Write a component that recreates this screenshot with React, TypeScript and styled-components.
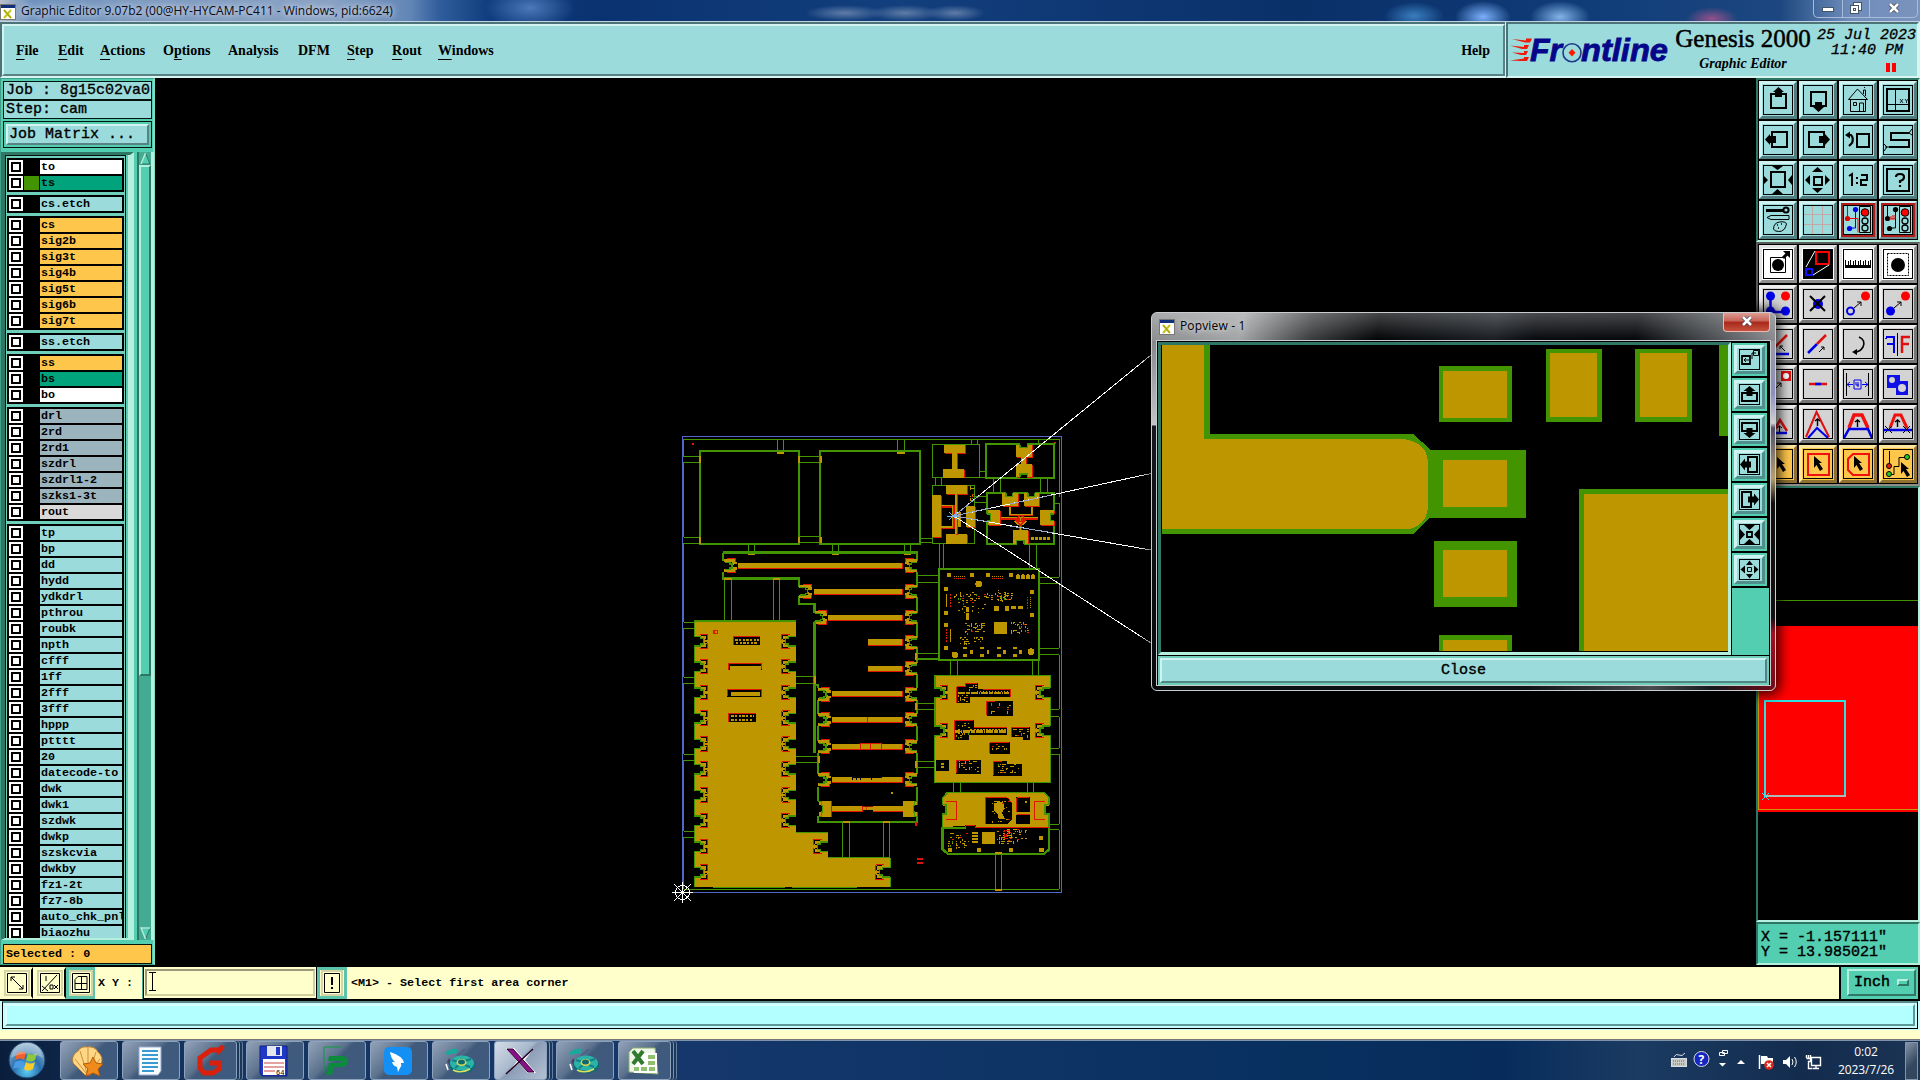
import React from "react";
import styled, { createGlobalStyle, css } from "styled-components";

const AQUA = "#9cdbdb";
const TEAL = "#54ceb0";
const DARK = "#2f7664";
const PALE = "#b4f0dd";
const CREAM = "#ffffcb";
const GOLD = "#bd9600";
const GREEN = "#429500";
const RED = "#e01600";
const ORANGE = "#ffc64c";
const MONO = `"Liberation Mono", "DejaVu Sans Mono", monospace`;
const SERIF = `"Liberation Serif", serif`;
const UI = `"Open Sans", "Noto Sans", sans-serif`;

const Global = createGlobalStyle`
  *, *::before, *::after { box-sizing: border-box; }
  body { margin: 0; background: #000; overflow: hidden; }
  svg { display: block; }
`;

const bevel = (light: string, dark: string, w = 3) => css`
  border: ${w}px solid;
  border-color: ${light} ${dark} ${dark} ${light};
`;

const Screen = styled.div`
  width: 1920px;
  height: 1080px;
  display: flex;
  flex-direction: column;
  background: #000;
  color: #000;
  font-family: ${MONO};
  position: relative;
  overflow: hidden;
`;

/* ---------- title bar ---------- */
const TitleBar = styled.div`
  height: 22px;
  flex: none;
  display: flex;
  align-items: flex-start;
  overflow: hidden;
  border-bottom: 1px solid #c3d2e2;
  background:
    radial-gradient(ellipse 45px 22px at 530px 8px, #4b78ba 0, transparent 100%),
    radial-gradient(ellipse 30px 14px at 1414px 16px, #3a7ec0 0, transparent 100%),
    radial-gradient(ellipse 28px 16px at 1483px 17px, #7cb0fb 0, transparent 100%),
    radial-gradient(ellipse 30px 16px at 1560px 17px, #82b4e8 0, transparent 100%),
    radial-gradient(ellipse 26px 12px at 1712px 19px, #95518a 0, transparent 100%),
    radial-gradient(ellipse 40px 8px at 845px 13px, #5f7da8 0, transparent 100%),
    radial-gradient(ellipse 36px 8px at 905px 13px, #5f7da8 0, transparent 100%),
    radial-gradient(ellipse 30px 8px at 955px 13px, #5f7da8 0, transparent 100%),
    linear-gradient(90deg, #b9c0cc 0, #6f93be 30px, #7d9ac0 130px, #8aa2c4 330px, #6286b6 410px, #2f5c9b 440px, #0f3c7c 490px, #0a3270 600px, #123f7d 900px, #0a3068 1300px, #103c78 1600px, #1c4780 1780px, #6f8dbb 1850px, #7a93bd 1920px);
`;
const TitleText = styled.span`
  font: 12px/20px ${UI};
  letter-spacing: 0;
  margin-left: 5px;
  white-space: nowrap;
  flex: 1;
  text-shadow: 0 0 6px #d6dfec, 0 0 6px #d6dfec;
  color: #0b0b14;
  padding-top: 1px;
`;
const TitleIcon = styled.div`
  padding-top: 4px;
`;
const AppIcon = styled.svg`
  width: 16px;
  height: 16px;
  flex: none;
`;
const CaptionButtons = styled.div`
  display: flex;
  width: 105px;
  height: 18px;
  margin-right: 2px;
  border: 1px solid #a9bbd8;
  border-top: 0;
  border-radius: 0 0 5px 5px;
  overflow: hidden;
`;
const Caption = styled.div<{ $w: number }>`
  width: ${(p) => p.$w}px;
  border-right: 1px solid #a9bbd8;
  display: flex;
  justify-content: center;
  align-items: center;
  padding-bottom: 1px;
  &:last-child { border-right: 0; }
`;

/* ---------- header ---------- */
const Header = styled.div`
  height: 56px;
  flex: none;
  display: flex;
  background: #d6f4f0;
`;
const MenuBar = styled.div`
  width: 1505px;
  border-top: 2px solid #4c7478;
  border-left: 2px solid #4c7478;
  border-bottom: 2px solid #d8f5f2;
  display: flex;
`;
const MenuInner = styled.div`
  flex: 1;
  ${bevel("#d2f3f0", "#588286", 2)}
  background: ${AQUA};
  display: flex;
  align-items: center;
  padding: 1px 13px 0 12px;
  gap: 17px;
  font: bold 14px/18px ${SERIF};
`;
const MenuItem = styled.span<{ $w?: number }>`
  width: ${(p) => (p.$w ? p.$w + "px" : "auto")};
  white-space: nowrap;
  u { text-underline-offset: 4px; text-decoration-thickness: 1px; }
`;
const Push = styled.span`
  flex: 1;
`;
const Brand = styled.div`
  flex: 1;
  margin: 0 1px 0 1px;
  border: 2px solid;
  border-color: #4c7478 #d8f5f2 #d8f5f2 #4c7478;
  background: ${AQUA};
  display: flex;
`;
const ProductCol = styled.div`
  width: 138px;
  margin-left: 2px;
  display: flex;
  flex-direction: column;
  align-items: center;
  white-space: nowrap;
`;
const Product = styled.div`
  font: 25px/29px ${SERIF};
  -webkit-text-stroke: 0.5px #000;
`;
const ProductSub = styled.div`
  font: italic bold 14px/22px ${SERIF};
`;
const DateCol = styled.div`
  flex: 1;
  display: flex;
  flex-direction: column;
  align-items: flex-end;
  font: italic 15px/15px ${MONO};
  -webkit-text-stroke: 0.3px #000;
  padding: 4px 1px 0 0;
  white-space: nowrap;
`;
const TimeLine = styled.div`
  margin-right: 13px;
`;
const Pause = styled.div`
  display: flex;
  gap: 2px;
  margin: 5px 20px 0 0;
  i { width: 4px; height: 9px; background: #ff0000; }
`;

/* ---------- main area ---------- */
const Main = styled.div`
  height: 887px;
  flex: none;
  display: flex;
`;
const Side = styled.div`
  width: 155px;
  flex: none;
  background: ${TEAL};
  border: 1px solid #3f9f88;
  border-right: 2px solid #7fdcc6;
  display: flex;
  flex-direction: column;
`;
const InfoBox = styled.div<{ $first?: boolean }>`
  margin: ${(p) => (p.$first ? "2px 1px 0 2px" : "0 1px 0 2px")};
  height: ${(p) => (p.$first ? 19 : 19)}px;
  flex: none;
  border: 1px solid #06140f;
  background: ${AQUA};
  font: 15px/18px ${MONO};
  -webkit-text-stroke: 0.35px #000;
  padding-left: 2px;
  white-space: pre;
  overflow: hidden;
`;
const MatrixFrame = styled.div`
  margin: 2px 1px 0 2px;
  height: 27px;
  flex: none;
  border: 1px solid #06140f;
  padding: 2px;
`;
const MatrixButton = styled.div`
  height: 21px;
  ${bevel("#d2f3f0", "#588286", 2)}
  background: ${AQUA};
  font: 15px/18px ${MONO};
  -webkit-text-stroke: 0.35px #000;
  padding-left: 1px;
  white-space: pre;
`;
const ListFrame = styled.div`
  margin-top: 4px;
  height: 788px;
  flex: none;
  display: flex;
`;
const ListEdge = styled.div`
  width: 133px;
  display: flex;
  border-left: 4px solid ${DARK};
  border-top: 3px solid ${DARK};
  border-right: 4px solid ${PALE};
  border-bottom: 2px solid ${PALE};
  background: #5fcab3;
`;
const ListView = styled.div`
  width: 122px;
  height: 783px;
  border: 1px solid #06140f;
  border-bottom: 0;
  padding: 2px 2px 0 1px;
  overflow: hidden;
  display: flex;
  flex-direction: column;
  gap: 3px;
  background: #6ed0ba;
`;
const ListRidge = styled.div`
  width: 2px;
  margin-left: 2px;
  background: ${PALE};
`;
const Group = styled.div`
  flex: none;
  width: 117px;
  background: #000;
  padding: 1px 0;
`;
const LayerRow = styled.div`
  height: 16px;
  display: flex;
  padding: 1px 2px 1px 2px;
`;
const Check = styled.i`
  width: 14px;
  height: 14px;
  flex: none;
  background: #fff;
  padding: 2px;
  display: flex;
  &::after { content: ""; width: 10px; height: 10px; border: 2px solid #000; background: #fff; }
`;
const Swatch = styled.i<{ $on?: boolean }>`
  width: 15px;
  height: 14px;
  flex: none;
  margin: 0 1px 0 1px;
  background: ${(p) => (p.$on ? GREEN : "#000")};
`;
const LayerName = styled.span<{ $c: string }>`
  flex: 1;
  min-width: 0;
  height: 14px;
  background: ${(p) => p.$c};
  color: #000;
  font: bold 11.7px/14px ${MONO};
  padding-left: 1px;
  overflow: hidden;
  white-space: pre;
`;
const ScrollBar = styled.div`
  width: 17px;
  margin-left: 3px;
  border-left: 2px solid ${DARK};
  border-right: 3px solid ${PALE};
  background: #43ab92;
  display: flex;
  flex-direction: column;
  align-items: center;
`;
const Thumb = styled.div`
  width: 12px;
  height: 511px;
  ${bevel(PALE, DARK, 2)}
  background: ${TEAL};
`;
const Selected = styled.div`
  margin: 4px 1px 0 2px;
  height: 20px;
  flex: none;
  border: 1px solid #06140f;
  background: ${ORANGE};
  font: bold 11.7px/18px ${MONO};
  padding-left: 2px;
  white-space: pre;
`;
const Canvas = styled.div`
  width: 1601px;
  background: #000;
`;

/* ---------- right tool column ---------- */
const Tools = styled.div`
  width: 164px;
  display: flex;
  flex-direction: column;
`;
const ToolPanel = styled.div<{ $gray?: boolean }>`
  flex: none;
  border: 2px solid;
  border-color: ${(p) => (p.$gray ? "#5a5a58 #8d8d8a #8d8d8a #5a5a58" : `${DARK} ${PALE} ${PALE} ${DARK}`)};
  background: #000;
  padding: 1px;
  display: grid;
  grid-template-columns: repeat(4, 38px);
  gap: 2px;
`;
type Tone = "aqua" | "red" | "white" | "gray" | "gold";
const tones: Record<Tone, [string, string, string]> = {
  aqua: [AQUA, "#cff3f0", "#527d80"],
  red: [AQUA, "#cff3f0", "#6f8f90"],
  white: ["#ffffff", "#e4e4e4", "#8e8e8e"],
  gray: ["#d3d3d3", "#eeeeee", "#767676"],
  gold: [ORANGE, "#ffe6a0", "#8f7030"],
};
const ToolButton = styled.div<{ $t: Tone }>`
  width: 38px;
  height: 38px;
  padding: 1px;
  border: 3px solid;
  border-color: ${(p) => {
    const [, l, d] = tones[p.$t];
    return `${l} ${d} ${d} ${l}`;
  }};
  background: ${(p) => (p.$t === "red" ? "#b01c1c" : tones[p.$t][0])};
  svg { background: ${(p) => tones[p.$t][0]}; }
  ${(p) => p.$t === "red" && css`border-width: 2px; padding: 2px;`}
`;
const Overview = styled.div`
  height: 436px;
  flex: none;
  border: 2px solid;
  border-color: ${DARK} ${PALE} ${PALE} ${DARK};
  background: #000;
`;
const Coords = styled.div`
  flex: 1;
  border: 2px solid;
  border-color: ${DARK} ${PALE} ${PALE} ${DARK};
  background: ${TEAL};
  font: 15px/15px ${MONO};
  -webkit-text-stroke: 0.4px #000;
  padding: 6px 0 0 3px;
  white-space: pre;
`;

/* ---------- status rows ---------- */
const StatusRow = styled.div`
  height: 34px;
  flex: none;
  border-top: 2px solid #000;
  background: ${CREAM};
  display: flex;
  font: bold 11.7px/32px ${MONO};
  white-space: pre;
`;
const StatusButton = styled.div<{ $teal?: boolean; $w: number }>`
  width: ${(p) => p.$w}px;
  height: 32px;
  flex: none;
  border: 3px solid ${(p) => (p.$teal ? "#5cc4aa" : CREAM)};
  border-right: ${(p) => (p.$teal ? `3px solid #5cc4aa` : "2px solid #000")};
  background: ${CREAM};
  display: flex;
  justify-content: center;
  align-items: center;
  svg { outline: 2px solid #d4d4a4; outline-offset: 1px; }
`;
const XYLabel = styled.div`
  width: 45px;
  margin-left: 3px;
  border-right: 1px solid #4a9;
`;
const XYField = styled.div`
  width: 174px;
  border: 1px solid #000;
  border-top: 0;
  padding: 2px 1px;
`;
const XYInput = styled.div`
  height: 27px;
  ${bevel("#9a9a7a", "#cfcfa0", 2)}
  padding: 1px 0 0 2px;
`;
const Prompt = styled.div`
  flex: 1;
  margin-left: 4px;
`;
const UnitBox = styled.div`
  width: 81px;
  border: 2px solid #000;
  border-width: 0 2px 0 2px;
  background: ${TEAL};
  padding: 2px 2px 2px 6px;
`;
const UnitButton = styled.div`
  height: 27px;
  ${bevel(PALE, DARK, 2)}
  font: 15px/24px ${MONO};
  -webkit-text-stroke: 0.5px #000;
  display: flex;
  align-items: center;
  justify-content: space-between;
  padding: 0 5px;
  i { width: 12px; height: 7px; ${bevel(PALE, DARK, 2)} }
`;
const MessageRow = styled.div`
  height: 31px;
  flex: none;
  background: #c9fbfb;
  border-top: 2px solid #000;
  padding: 0 0 2px 2px;
`;
const MessageFrame = styled.div`
  height: 28px;
  margin-right: 2px;
  border: 1px solid #000;
  border-top: 2px solid #5a8788;
  padding: 1px 2px 2px;
  background: #c9fdfd;
`;
const MessageField = styled.div`
  height: 22px;
  background: #b3ffff;
  ${bevel("#d6ffff", "#5d9999", 2)}
`;
const CreamStrip = styled.div`
  height: 10px;
  flex: none;
  background: ${CREAM};
  border-bottom: 1px solid #777;
`;

/* ---------- taskbar ---------- */
const Taskbar = styled.div`
  flex: 1;
  display: flex;
  align-items: stretch;
  border-top: 1px solid #7f93ad;
  background: linear-gradient(90deg, #0a1e3c 0, #15355f 200px, #15376b 700px, #08305f 1300px, #072c5c 1500px, #1b3b62 1640px, #132c4e 1800px, #1b3454 1920px);
`;
const Start = styled.div`
  width: 60px;
  display: flex;
  justify-content: center;
  padding-right: 6px;
`;
const Task = styled.div<{ $active?: boolean; $stack?: boolean }>`
  width: ${(p) => (p.$stack ? 53 : 58)}px;
  margin-right: ${(p) => (p.$stack ? 9 : 4)}px;
  border: 1px solid #8da3bd;
  border-radius: 3px;
  background: ${(p) =>
    p.$active
      ? "linear-gradient(135deg, #d5dde8 0, #a8b8cc 45%, #8b9db6 50%, #b3c0d2 100%)"
      : "linear-gradient(135deg, #93a3b8 0, #5b718d 42%, #405a7b 50%, #3d5a80 100%)"};
  ${(p) => p.$stack && css`box-shadow: 2px 0 0 #1c375c, 3px 0 0 #7d93ae, 5px 0 0 #1c375c, 6px 0 0 #667e9c;`}
  display: flex;
  justify-content: center;
  align-items: center;
  padding-right: 2px;
`;
const Tray = styled.div`
  margin-left: auto;
  display: flex;
  align-items: center;
`;
const TrayIcons = styled.svg`
  width: 160px;
  height: 38px;
`;
const Clock = styled.div`
  width: 78px;
  text-align: center;
  color: #fff;
  font: 12px/18px ${UI};
  letter-spacing: -0.1px;
`;
const ShowDesktop = styled.div`
  width: 13px;
  height: 38px;
  margin: 0 2px 0 0;
  border: 1px solid #8494ab;
  background: linear-gradient(135deg, #8593a6, #33475f 60%);
`;

/* ---------- popview window ---------- */
const PopWindow = styled.div`
  position: absolute;
  left: 1151px;
  top: 312px;
  width: 625px;
  height: 379px;
  border: 1px solid #c9ccd0;
  border-radius: 6px;
  box-shadow: 0 0 12px 4px rgba(0, 0, 0, 0.75);
  padding: 0 4px 4px;
  background:
    linear-gradient(180deg, transparent 0 28px, #85878b 28px, #c2c4c6 112px, #15181c 113px, #06080a 100%) 0 0 / 5px 100% no-repeat,
    linear-gradient(180deg, transparent 0 28px, #9a9aa4 28px, #8c8ec0 80px, #d0d0d4 110px, #50506a 115px, #b5a070 165px, #111 190px, #111 305px, #a01020 320px, #700c18 100%) 100% 0 / 6px 100% no-repeat,
    linear-gradient(180deg, rgba(255,255,255,.25) 0, rgba(255,255,255,0) 26px) 0 0 / 100% 28px no-repeat,
    linear-gradient(100deg, #8c8e90 0, #a4a6a8 90px, #3c3e40 160px, #050608 225px, #1c2025 340px, #0a0c10 380px, #07090c 480px, #5a5d61 570px, #909296 625px) 0 0 / 100% 28px no-repeat,
    linear-gradient(90deg, #0c0e10 0, #0e1215 60%, #4a4d50 80%, #14181c 90%, #700c18 100%);
`;
const PopTitle = styled.div`
  height: 27px;
  display: flex;
  padding-left: 3px;
  font: 12px/26px ${UI};
`;
const PopName = styled.span`
  margin-left: 5px;
  flex: 1;
  letter-spacing: 0.15px;
  text-shadow: 0 0 7px #ddd, 0 0 5px #ccc;
`;
const PopIcon = styled.div`
  padding-top: 6px;
`;
const PopClose = styled.div`
  width: 47px;
  height: 19px;
  margin-right: 1px;
  border: 1px solid #f0b8b0;
  border-top: 0;
  border-radius: 0 0 4px 4px;
  background: linear-gradient(180deg, #dd9d94 0, #c66256 45%, #a8281a 50%, #c4523e 100%);
  display: flex;
  justify-content: center;
  align-items: center;
  padding-bottom: 2px;
`;
const PopBody = styled.div`
  height: 346px;
  border: 1px solid #c8ccd0;
  background: #000;
  padding: 1px;
  display: flex;
  flex-direction: column;
`;
const PopUpper = styled.div`
  height: 313px;
  flex: none;
  display: flex;
`;
const PopView = styled.div`
  width: 573px;
  flex: none;
  border: 3px solid;
  border-color: ${DARK} ${PALE} ${PALE} ${DARK};
`;
const PopTools = styled.div`
  flex: 1;
  margin-left: 1px;
  margin-top: 1px;
  background: ${TEAL};
  display: flex;
  flex-direction: column;
`;
const PopToolCell = styled.div`
  height: 35px;
  flex: none;
  border-bottom: 2px solid #000;
  border-right: 2px solid #000;
  padding: 2px;
`;
const PopToolButton = styled.div`
  width: 31px;
  height: 29px;
  ${bevel("#cff3f0", "#4f8f8c", 3)}
  background: ${AQUA};
  display: flex;
  justify-content: center;
  align-items: center;
`;
const PopCloseBar = styled.div`
  flex: 1;
  margin: 1px 0 0;
  border: 2px solid #6fcdb8;
  display: flex;
`;
const PopCloseButton = styled.div`
  flex: 1;
  ${bevel("#cff3f0", "#4f8583", 2)}
  background: ${AQUA};
  font: 15px/21px ${MONO};
  -webkit-text-stroke: 0.4px #000;
  text-align: center;
`;

/* ---------- data ---------- */
type G = [string, string[]][];
const STEEL = "#9bb4bd";
const groups: G[] = [
  [["#ffffff", ["to"]], ["#00a37c", ["ts"]]],
  [[AQUA, ["cs.etch"]]],
  [[ORANGE, ["cs", "sig2b", "sig3t", "sig4b", "sig5t", "sig6b", "sig7t"]]],
  [[AQUA, ["ss.etch"]]],
  [[ORANGE, ["ss"]], ["#00a37c", ["bs"]], ["#ffffff", ["bo"]]],
  [[STEEL, ["drl", "2rd", "2rd1", "szdrl", "szdrl1-2", "szks1-3t"]], ["#d9d9d9", ["rout"]]],
  [[AQUA, ["tp", "bp", "dd", "hydd", "ydkdrl", "pthrou", "roubk", "npth", "cfff", "1ff", "2fff", "3fff", "hppp", "ptttt", "20", "datecode-to", "dwk", "dwk1", "szdwk", "dwkp", "szskcvia", "dwkby", "fz1-2t", "fz7-8b", "auto_chk_pnl", "biaozhu"]]],
];

const K = "#000";
const B = "#0000e8";
const R = "#f00000";
const L = (d: string, c = K, w = 1, fill = "none") => <path d={d} stroke={c} strokeWidth={w} fill={fill} />;
const P = (d: string, c = K) => <path d={d} fill={c} />;
const Dot = ({ x, y, r = 4.5, c = B }: { x: number; y: number; r?: number; c?: string }) => <circle cx={x} cy={y} r={r} fill={c} />;

const cursor = (x: number, y: number) => P(`M${x} ${y}l8 7h-3l4 6l-3 2l-3.500-6l-2.500 3z`);
const lights = (a: string, b: string) => (
  <>
    {L("M16.500 1.500h11v26h-11z")}
    <circle cx="22" cy="7.500" r="3.800" fill="#ff0000" stroke={K} />
    <circle cx="22" cy="16" r="3" fill="none" stroke={K} strokeWidth="1.300" />
    <circle cx="22" cy="23" r="3" fill="none" stroke={K} strokeWidth="1.300" />
    {L("M4.500 0v12", a)}
    {L("M12.500 4v19H7", b)}
    <Dot x={12.500} y={4.500} r={2.600} c={b} />
    <Dot x={4.500} y={13.500} r={2.600} c={a} />
    <Dot x={6.500} y={23.500} r={2.600} c={b} />
  </>
);

const icons: [Tone, React.ReactNode][] = [
  ["aqua", <>{L("M8 9h15v14h-15z", K, 2)}{P("M15.500 2l5.500 5h-2v5h-7v-5h-2z")}</>],
  ["aqua", <>{L("M8 7h15v14h-15z", K, 2)}{P("M15.500 27l5.500-5h-2v-5h-7v5h-2z")}</>],
  ["aqua", <>{L("M5.500 14.500L14.500 4l10 10.500zM7.500 14.500v12h15v-12M10.500 17.500h3v3h-3zM16.500 26v-8h4v8M20.500 9v-4h2v6M21 3l1-1")}</>],
  ["aqua", <>{L("M4 4h22v22h-22z", K, 2)}{L("M12.500 4v22M4 19.500h22")}{L("M17 14l3 4M20 14l-3 4M22 14l1.500 2l1.500-2M23.500 16v2", K, 0.8)}</>],
  ["aqua", <>{L("M9 7h15v15h-15z", K, 2)}{P("M2 14.500l5-5.500v2h6v7h-6v2z")}</>],
  ["aqua", <>{L("M6 7h15v15h-15z", K, 2)}{P("M27 14.500l-5-5.500v2h-6v7h6v2z")}</>],
  ["aqua", <>{L("M14 9h12v13h-12z", K, 2)}{L("M5 10h3q3 3 1 8l-3 3", K, 2.2)}{P("M2 10l5-3.500v7z")}</>],
  ["aqua", <>{L("M26 8H8v7h18v7H6", K, 2)}{L("M29 4l-3 4l3 2M1 19l3 3l-3 4M2 22h4")}</>],
  ["aqua", <>{L("M8 7h14v15h-14z", K, 2)}{P("M9 1h11l-5.500 4zM9 29h11l-5.500-5zM0 10v10l5-5zM29 10v10l-4-5z")}</>],
  ["aqua", <>{L("M11 12h8v8h-8z", K, 2)}{P("M9 7h11l-5.500-5zM9 23h11l-5.500 5zM7 10v10l-5-5zM22 10v10l5-5z")}</>],
  ["aqua", <>{L("M6 11l3-2v12M14 12v2M14 17v2M18 10h6v5h-6v5h6", K, 2)}</>],
  ["aqua", <>{L("M4 4h22v22h-22z", K, 2)}{L("M13 12q0-3 4-3q4 0 4 3q0 3-4 4v2M17 20v2", K, 2.2)}</>],
  ["aqua", <>{L("M3 5.500h17", K, 3)}<circle cx="23" cy="5" r="2.600" fill="none" stroke={K} strokeWidth="2" />{L("M4 12.500l4-2h18v4h-18zM10.500 24q0-6 6-7q6-1 7 2q-1 3-2 5q-3 3-6 2.500q-4 0-5-2.500z")}{L("M14 20h1M18 19h1M15 23h1", K, 1.500)}</>],
  ["aqua", <>{L("M9.500 1v28M19.500 1v28M1 9.500h28M1 19.500h28", "#c4a8a8")}</>],
  ["red", <>{lights("#e00000", B)}{L("M5 13.500h10v14", R)}</>],
  ["red", <>{lights(K, K)}{L("M6 14h6M8 11v3M10 10v4M12 10v4", R)}</>],
  ["white", <>{L("M7.500 8.500h15v15h-15z")}<Dot x={15} y={16} r={6} c={K} />{L("M20 9l6-6", K, 3)}{P("M20 2h7v7z")}</>],
  ["white", <>{P("M0 0h30v30H0z")}{L("M13 3h13v12H13z", "#ff0000", 2)}{L("M3 20h6v6h-6z", "#1010ff", 2)}{L("M3 18L12 2M10 26l16-10", "#fff")}</>],
  ["white", <>{P("M2 11v8h26v-8h-1v5h-1v-4h-1v4h-2v-5h-1v5h-1v-4h-1v4h-2v-5h-1v5h-1v-4h-1v4h-2v-5h-1v5h-1v-4h-1v4h-2v-5h-1v5h-1v-4h-1v4h-2v-5z")}</>],
  ["white", <><rect x="4.500" y="4.500" width="21" height="22" fill="none" stroke={K} strokeDasharray="2 1" /><Dot x={15} y={16} r={7} c={K} /></>],
  ["gray", <>{L("M7.500 8v12q2 3 6 3h9", B, 2.500)}<Dot x={7.500} y={7} /><Dot x={22.500} y={7} c="#ff0000" /><Dot x={7.500} y={22} /><Dot x={22.500} y={22} /></>],
  ["gray", <><Dot x={15} y={15} r={5} />{L("M7 7l15 15M22 7L7 22", K, 2)}</>],
  ["gray", <><Dot x={22.500} y={7} c="#ff0000" /><circle cx="7.500" cy="22" r="3.500" fill="none" stroke={B} strokeWidth="2" />{L("M11 19l7-6M14 13h4v4")}</>],
  ["gray", <><Dot x={22.500} y={7} c="#ff0000" /><Dot x={7.500} y={22} />{L("M11 19l7-6M14 13h4v4")}</>],
  ["gray", <>{L("M10 20L24 6", "#e01010", 2.500)}{L("M4 25h22", B, 2.500)}{L("M22 22l-5-5M17 20v-3h3")}</>],
  ["gray", <>{L("M5 24L14 15", B, 2.500)}{L("M14 15L23 6", "#e01010", 2.500)}{L("M16 23l5-5M18 18h3v3")}</>],
  ["gray", <>{L("M16 8q7 3 4 10q-3 5-8 5", K, 1.600)}{P("M9 23l5-3v6z")}</>],
  ["gray", <>{L("M3 8h8v16M11 15h-7M3 9v1", B, 2)}{L("M19 24V8h8M19 15h7", "#e01010", 2.500)}{L("M14.500 4v23")}</>],
  ["gray", <>{P("M18 2h10v10h-10z", "#e01010")}<circle cx="23" cy="7" r="3" fill="#fff" />{L("M12 20l6-6M14 14h4v4")}</>],
  ["gray", <>{L("M6 15h18", "#e01010", 2.500)}{L("M12 15h6", B, 2.500)}</>],
  ["gray", <>{L("M3.500 4v23M25.500 4v23")}{L("M4 15.500h6M7 13l-3 2.500l3 2.500M19 15.500h6M22 13l3 2.500l-3 2.500M11 11h7v9h-7zM13 13v3h3M15 13v5", B)}</>],
  ["gray", <>{P("M4 6h13v6h8v14h-12v-7h-9z", "#1010e8")}<Dot x={9} y={11} r={3} c="#d3d3d3" /><Dot x={19} y={19} r={4} c="#d3d3d3" /></>],
  ["gray", <>{L("M10 24L17 11L24 22", "#e01010", 2.500)}{L("M6 24h18", B, 2.500)}{L("M16.500 24v-7M14 19l2.500-2l2.500 2")}</>],
  ["gray", <>{L("M3 28L13.500 3L26 28", "#e01010", 2)}{L("M5 29L14 19L25 29", B, 2)}{L("M14.500 17v-7M12 12l2.500-2l2.500 2", K, 1.400)}</>],
  ["gray", <>{L("M6 19L11 6h8l6 13", "#f01010", 3.500)}{L("M1 29L6 20h19l4 9", B, 2.500)}{L("M14.500 18v-7M12 13l2.500-2l2.500 2", K, 1.400)}</>],
  ["gray", <>{L("M7 19L12 6h6l6 13", "#f01010", 3)}{L("M1 21h28", B, 2.500)}{L("M14.500 18v-7M12 13l2.500-2l2.500 2", K, 1.400)}{L("M2 17l7 7M9 17l-7 7M20 17l7 7M27 17l-7 7")}</>],
  ["gold", <>{cursor(14, 8)}</>],
  ["gold", <>{L("M5 5h21v21h-21z", "#f01010", 2)}{cursor(11, 7)}</>],
  ["gold", <>{L("M10 5h16v21h-16l-5-5v-11z", "#f01010", 2)}{cursor(11, 7)}</>],
  ["gold", <>{L("M6.500 2v18M6 25.500h5v-8h5v-9h8")}<circle cx="24" cy="8" r="2.500" fill="#20d020" stroke={K} /><circle cx="6" cy="17" r="2.500" fill="#e02010" stroke={K} /><circle cx="6" cy="25" r="2.500" fill="#20d020" stroke={K} />{cursor(18, 13)}</>],
];

const popIcons: React.ReactNode[] = [
  <>{L("M3 7h8v8h-8z", K, 1.800)}{L("M14.500 1.500h5v5h-5zM13 10v-6h4M5 11h5M7 9l-2 2l2 2")}</>,
  <>{L("M8 9H3v8h15v-8h-5", K, 2)}{P("M10.500 2l6 5h-3v5h-6v-5h-3z")}</>,
  <>{L("M8 12H3V4h15v8h-5", K, 2)}{P("M10.500 19l6-5h-3v-5h-6v5h-3z")}</>,
  <>{L("M9 8V3h9v15h-9v-5", K, 2)}{P("M1 10.500l5-6v3h6v6h-6v3z")}</>,
  <>{L("M12 8V3h-9v15h9v-5", K, 2)}{P("M20 10.500l-5-6v3h-6v6h6v3z")}</>,
  <>{L("M8 8h5v5h-5z", K, 1.800)}{P("M5 1h11l-5.500 5zM5 20h11l-5.500-5zM1 5v11l5-5.500zM20 5v11l-5-5.500z")}</>,
  <>{L("M8.500 8.500h4v4h-4z")}{P("M7 6h7l-3.500-4.500zM7 15h7l-3.500 4.500zM6 6.500v8l-4.500-4zM15 6.500v8l4.500-4z")}</>,
];

const XIcon = () => (
  <AppIcon viewBox="0 0 16 16">
    <rect x="0.500" y="0.500" width="15" height="15" fill="#fff" stroke="#777" />
    <rect x="1" y="1" width="14" height="3" fill="#10307c" />
    <path d="M4 6l7 8M11 6l-7 8" stroke="#c6c414" strokeWidth="2" />
    <path d="M4 6l7 8" stroke="#777a10" strokeWidth="0.600" />
  </AppIcon>
);

/* ---------- board drawing ---------- */
const seeded = (seed: number) => {
  let s = seed;
  return () => {
    s = (s * 16807) % 2147483647;
    return s / 2147483647;
  };
};
/** A scatter of small pads inside a region. */
const Pads = ({ x, y, w, h, n, seed, c = GOLD }: { x: number; y: number; w: number; h: number; n: number; seed: number; c?: string }) => {
  const r = seeded(seed * 7919);
  return (
    <>
      {Array.from({ length: Math.round(n * 0.8) }, (_, i) => {
        const a = Math.floor((r() * w) / 6) * 6;
        const b = Math.floor((r() * h) / 6) * 6;
        const v = r();
        return <rect key={i} x={x + a} y={y + b} width={v > 0.5 ? 6 : 3} height={v > 0.3 ? 3 : 7} fill={v > 0.93 ? RED : v < 0.06 ? GREEN : c} />;
      })}
    </>
  );
};
/** Edge cut-out with its connector bracket; `f` is -1 when it opens to the right. */
const Notch = ({ x, y, f = 1 }: { x: number; y: number; f?: number }) => (
  <g transform={`translate(${x} ${y}) scale(${f} 1)`}>
    <path d="M-4-14H20V-9H29V9H20V14H-4z" fill="#000" />
    <path d="M-1-14H20V-8H29V8H20V14H-1" fill="none" stroke={GREEN} strokeWidth="4" />
    <path d="M17-22H41V-4M41 4V22H17" fill="none" stroke={RED} strokeWidth="3" />
    <path d="M22-19H38V-8M38 8V19H22M32-5h6M32 5h6" fill="none" stroke="#000" strokeWidth="3" />
  </g>
);
/** Strip end clamp. */
const Clamp = ({ x, y, f = 1 }: { x: number; y: number; f?: number }) => (
  <g transform={`translate(${x} ${y}) scale(${f} 1)`}>
    <path d="M8-21H34V-10M8 21H34V10" fill="none" stroke={RED} strokeWidth="3" />
    <path d="M-2-15H28V-7H36M-2 15H28V7H36" fill="none" stroke={GOLD} strokeWidth="9" />
    <path d="M0-11H16V-6H22V6H16V11H0" fill="none" stroke={GREEN} strokeWidth="4" />
    <path d="M28-3h9M28 3h9" stroke="#000" strokeWidth="3" />
  </g>
);
const Strip = ({ x, y, x2, h = 17 }: { x: number; y: number; x2: number; h?: number }) => (
  <>
    <rect x={x} y={y - h / 2} width={x2 - x + 3} height={h + 1} fill={RED} />
    <rect x={x} y={y - h / 2} width={x2 - x} height={h - 2} fill={GOLD} />
  </>
);
const gl = (d: string, w = 2.500) => <path d={d} fill="none" stroke={GREEN} strokeWidth={w} />;
const gr = (x: number, y: number, w: number, h: number, c = GOLD) => <rect x={x} y={y} width={w} height={h} fill={c} />;
const rg = (x: number, y: number, w: number, h: number) => (
  <>
    {gr(x + 3, y + 2, w, h, RED)}
    {gr(x, y, w, h)}
  </>
);

const Board = () => (
  <svg width="1601" height="887" viewBox="155 78 1601 887" shapeRendering="crispEdges">
    <g transform="translate(670 420) scale(.33333)">
      {/* rails along the panel outline */}
      {gl("M42 58H1168V232M42 58V110H90M42 127H90M42 127V352H90M42 370H90M42 370V607H75M42 625H75M42 625V772H75M1168 250V472H1108M1168 492V685H1108M1168 250H1152M1108 492H1168M322 58V98M340 58V98M683 58V98M703 58V98M905 58V74M923 58V74M1106 70V58", 3)}
      {gl("M90 94H387V373H90zM90 240v130M450 94H750V373H450z", 5)}
      {gl("M387 110h63M387 127h63M387 349h63M387 367h63M750 355h40M750 367h40M235 373v30M253 373v30M487 373v30M505 373v30M705 373v30M721 373v30", 3)}
      {gr(322, 95, 20, 6)}{gr(682, 95, 22, 6)}{gr(235, 399, 20, 6)}{gr(487, 399, 20, 6)}{gr(703, 399, 20, 6)}
      {gr(87, 108, 5, 20)}{gr(385, 108, 5, 20)}{gr(450, 108, 5, 20)}{gr(87, 352, 5, 20)}{gr(385, 350, 5, 20)}{gr(450, 350, 5, 20)}
      {gr(67, 69, 5, 5, RED)}{gr(1153, 67, 5, 5, RED)}
      {/* upper right coupons */}
      {gl("M787 73H928V173H787zM787 196H914V371H787zM797 173v25M815 173v25M930 154h18v18h-18zM971 173v45M992 173v45M1112 173v45M1133 173v45M914 230h36M914 247h36M808 371v77M821 371v77M1078 371v77M1100 371v77", 3)}
      {gl("M947 71H1152V174H947zM950 218H1153V373H950z", 6)}
      {rg(822, 74, 64, 25)}{rg(847, 97, 13, 52)}{rg(819, 148, 64, 25)}
      {rg(828, 196, 64, 27)}{rg(828, 343, 64, 28)}{rg(787, 226, 27, 126)}{rg(889, 258, 25, 64)}{rg(856, 222, 5, 120)}
      <path d="M814 260H851V323H814" fill="none" stroke={RED} strokeWidth="7" />
      <path d="M814 257H848V321H814" fill="none" stroke={GOLD} strokeWidth="5" />
      {gr(864, 275, 10, 45)}
      <Pads x={900} y={198} w={12} h={50} n={22} seed={5} />
      {rg(1037, 74, 48, 38)}{rg(1052, 110, 16, 24)}{rg(1037, 132, 48, 40)}
      {gr(1050, 66, 22, 16, "#000")}{gr(1050, 162, 22, 12, "#000")}{gl("M1050 74v8h22v-8M1050 172v-10h22v10", 4)}
      {rg(997, 220, 46, 38)}{rg(1062, 220, 44, 38)}{rg(953, 270, 38, 45)}{rg(1110, 270, 42, 45)}{rg(1028, 331, 46, 40)}
      {gr(1008, 214, 20, 16, "#000")}{gr(1074, 214, 20, 16, "#000")}{gr(946, 282, 16, 20, "#000")}{gr(1142, 282, 14, 20, "#000")}{gr(1040, 360, 22, 16, "#000")}
      {gl("M1008 218v12h20v-12M1074 218v12h20v-12M950 282h12v20h-12M1152 282h-10v20h10M1040 373v-12h22v12", 4)}
      <path d="M1020 262V285H1086V262M992 295H1104M1051 295V331" fill="none" stroke={RED} strokeWidth="8" />
      <path d="M1020 260V283H1086V260M992 293H1104M1051 295V331" fill="none" stroke={GOLD} strokeWidth="4" />
      <path d="M1030 302H1074L1062 314H1040z" fill={GOLD} /><path d="M1036 300l15 16l16-16" fill="none" stroke={RED} strokeWidth="4" />
      <circle cx="1052" cy="296" r="9" fill="none" stroke={RED} strokeWidth="4" />
      {[0, 1, 2, 3, 4].map((i) => gr(1084 + i * 12, 351, 7, 9))}
      {/* stepped strip array */}
      {gl("M160 398H742V423M160 398V423M160 455V476H387V500M387 528V553H434V578M434 605V1000M742 455V500M742 530V578M742 605V655M742 685V700", 7)}
      {gl("M164 478V603M185 478V603M310 478V603M328 478V603", 3)}
      {gr(163, 473, 24, 7)}{gr(308, 473, 22, 7)}
      <Clamp x={164} y={438} /><Strip x={204} y={437} x2={697} /><Clamp x={740} y={438} f={-1} />
      <Clamp x={390} y={514} /><Strip x={432} y={515} x2={697} /><Clamp x={740} y={514} f={-1} />
      <Clamp x={436} y={592} /><Strip x={474} y={593} x2={697} /><Clamp x={740} y={592} f={-1} />
      <Strip x={594} y={667} x2={697} /><Clamp x={740} y={668} f={-1} />
      {gl("M742 466H808M742 487H808M742 700H808M742 717H808", 3)}
      {/* main component board */}
      {gl("M807 447H1107V720H807z", 7)}
      {[[837, 465], [907, 465], [953, 465], [1022, 465], [828, 507], [828, 578], [828, 615], [828, 684], [1087, 515], [1087, 585]].map(([a, b], i) => (
        <React.Fragment key={i}>{gr(a - 6, b - 6, 12, 12)}</React.Fragment>
      ))}
      {[0, 1, 2, 3].map((i) => <ellipse key={i} cx={1044 + i * 15} cy="470" rx="6" ry="8" fill={GOLD} />)}
      <circle cx="926" cy="492" r="10" fill={GOLD} /><circle cx="855" cy="705" r="10" fill={GOLD} /><circle cx="1083" cy="695" r="10" fill={GOLD} />
      {gr(972, 606, 38, 37)}{gr(973, 558, 14, 14)}{gr(1006, 558, 11, 14)}{gr(1024, 558, 14, 9)}{gr(1044, 558, 14, 9)}{gr(888, 561, 9, 15)}{gr(888, 580, 9, 19)}
      <path d="M853 470h36M967 470h36" stroke={GOLD} strokeWidth="3" strokeDasharray="3 3" />
      <path d="M853 477h36M967 477h36" stroke={RED} strokeWidth="3" strokeDasharray="3 3" />
      <path d="M829 523v38M841 628v38M1082 530v38" stroke={GOLD} strokeWidth="3" strokeDasharray="4 2" />
      <path d="M841 523v38M829 628v38M1072 530v38M882 525v36" stroke={RED} strokeWidth="3" strokeDasharray="5 3" />
      <Pads x={852} y={515} w={98} h={66} n={60} seed={11} />
      <Pads x={952} y={518} w={82} h={24} n={36} seed={23} />
      <Pads x={984} y={510} w={24} h={34} n={24} seed={24} />
      <Pads x={884} y={608} w={60} h={32} n={44} seed={31} />
      <Pads x={1022} y={605} w={52} h={36} n={44} seed={47} />
      <Pads x={870} y={650} w={74} h={22} n={34} seed={53} />
      {[880, 930, 980, 1028].map((a) => (
        <React.Fragment key={a}>{gr(a, 680, 12, 7)}{gr(a, 703, 12, 7)}{gr(a + 20, 690, 8, 11)}</React.Fragment>
      ))}
    </g>

    <g transform="translate(670 640) scale(.33333)">
      {gl("M42 112H75M42 130H75M42 130V343H75M42 361H75M42 361V574H75M42 592H75M42 592V748H1168V570H1138M1168 553H1138M1168 553V343H1140M1168 325H1140M1168 325V230H1140M1168 208H1140M1168 208V44H1108M1168 25H1108M1168 25V-40M378 109H436M378 130H436M378 349H446M378 367H446M740 40H808M740 58H808M740 190H795M740 208H795M740 364H795M740 382H795M842 60V106M862 60V106M1088 60V106M1106 60V106M850 428V460M871 428V460M1073 428V460M1090 428V460M518 545V652M538 545V652M641 545V655M658 545V655M976 640V748M994 640V748", 3)}
      {/* large L-shaped board */}
      <path d="M73-57H378V577H473V655H661V740H73z" fill={GOLD} />
      {gl("M73-57H378M378 577H473M475 653H661M73 740V712M73 682V635M73 605V558M73 528V480M73 450V404M73 374V326M73 298V250M73 220V174M73 144V96M73 66V18M73-12V-57M661 655V740M130 742H345M365 742H560", 4)}
      {[4, 80, 158, 235, 312, 388, 465, 542, 620, 697].map((y) => <Notch key={y} x={72} y={y} />)}
      {[4, 80, 158, 235, 312, 388, 465, 542].map((y) => <Notch key={y} x={376} y={y} f={-1} />)}
      <Notch x={472} y={620} f={-1} /><Notch x={658} y={697} f={-1} />
      {gr(130, -30, 14, 12, RED)}{gr(134, -27, 7, 7)}
      {gr(189, -12, 82, 26, "#000")}
      <path d="M190 14V-11H270" fill="none" stroke={RED} strokeWidth="3" />
      <path d="M196 0H266M198 10H264" stroke={GOLD} strokeWidth="5" strokeDasharray="7 4" />
      {gr(175, 69, 100, 20, "#000")}{gr(179, 77, 95, 14)}<path d="M175 89V70H275V88" fill="none" stroke={RED} strokeWidth="3" />
      {gr(172, 147, 103, 24, "#000")}{gr(182, 155, 88, 13)}<path d="M173 168V148H275V170" fill="none" stroke={RED} strokeWidth="3" />
      {gr(175, 219, 83, 26, "#000")}<path d="M176 245V220H257" fill="none" stroke={RED} strokeWidth="3" /><path d="M184 228H252M184 240H250" stroke={GOLD} strokeWidth="6" strokeDasharray="7 4" />
      {/* lower strip array */}
      {gl("M434-57V135H444V145M444 180V222M444 258V302M444 340V402M444 440V484M444 528V546H742V528M742 484V440M742 402V340M742 302V258M742 222V180M742 145V102M742 68V22", 6)}
      <Strip x={594} y={8} x2={697} /><Clamp x={740} y={8} f={-1} />
      <Strip x={594} y={86} x2={697} /><Clamp x={740} y={86} f={-1} />
      {[163, 240, 321, 420].map((y) => (
        <React.Fragment key={y}>
          <Clamp x={446} y={y} /><Strip x={486} y={y} x2={697} /><Clamp x={740} y={y} f={-1} />
        </React.Fragment>
      ))}
      {gr(590, 231, 4, 17, RED)}
      <rect x="572" y="310" width="62" height="20" fill={GOLD} stroke={RED} strokeWidth="3" />{gr(600, 310, 3, 20, RED)}
      <path d="M548 414v6M560 414v6M572 414v6M604 414v6" stroke="#000" strokeWidth="3" />{gr(546, 411, 90, 3, "#000")}
      <Strip x={484} y={506} x2={575} /><Strip x={609} y={506} x2={700} />{gr(578, 501, 30, 9)}<path d="M578 500h30M590 500v10" stroke={RED} strokeWidth="2" />
      {rg(446, 482, 38, 48)}{rg(700, 482, 40, 48)}
      {gr(442, 496, 14, 20, "#000")}{gr(730, 496, 14, 20, "#000")}{gl("M444 484h10v12h4v20h-4v14h-10M742 484h-8v12h-4v20h4v14h8", 4)}
      {gr(663, 456, 6, 6)}{gr(736, 545, 5, 12, RED)}{gr(518, 542, 22, 6)}{gr(640, 542, 20, 6)}
      {gr(741, 654, 18, 5, "#e01010")}{gr(741, 667, 18, 5, "#e01010")}
      {gr(433, 109, 5, 22)}{gr(444, 347, 5, 22)}{gr(736, 38, 5, 22)}{gr(736, 188, 5, 22)}{gr(736, 362, 5, 22)}
      {/* two-up module board */}
      <path d="M795 106H1141V427H793V290H795z" fill={GOLD} />
      {gl("M795 106H1141V427H793V290H795z", 4)}
      <Notch x={793} y={158} /><Notch x={793} y={272} /><Notch x={1139} y={158} f={-1} /><Notch x={1139} y={272} f={-1} />
      <path d="M860 188V138H886V130H924V148H1023V171H900V188zM951 183H1029V228H951zM853 299V241H911V261H1011V285H897V299zM1024 262H1080V299H1060V292H1024zM960 307H1020V341H960zM859 360H933V402H859zM970 364H1010V371H1056V407H970zM798 360H837V392H798z" fill="#000" />
      <path d="M860 188V140H886V131H922M940 149H1023M853 299V242H910M912 262H1011M1024 290V263H1078M960 338V308H1018M859 400V361H900M970 404V365H995M951 226V184H975M1022 150v20" fill="none" stroke={RED} strokeWidth="3" />
      <path d="M864 160H1018M856 275H1008" stroke={GOLD} strokeWidth="7" strokeDasharray="14 2 5 2" />
      <path d="M920 154H1018M912 268H1008" stroke={GOLD} strokeWidth="3" strokeDasharray="5 4" />
      <Pads x={864} y={165} w={32} h={22} n={16} seed={61} /><Pads x={896} y={134} w={24} h={14} n={10} seed={62} />
      <Pads x={956} y={190} w={66} h={30} n={12} seed={63} /><Pads x={858} y={248} w={48} h={44} n={24} seed={64} />
      <Pads x={1028} y={268} w={46} h={24} n={18} seed={65} /><Pads x={965} y={312} w={46} h={18} n={14} seed={66} />
      <Pads x={868} y={364} w={60} h={32} n={30} seed={67} /><Pads x={978} y={372} w={70} h={30} n={36} seed={68} />
      {gr(814, 369, 8, 6)}{gr(814, 379, 8, 6)}
      {/* bottom module */}
      <path d="M832 458H1125L1138 472V562H1050L916 562L890 556L818 562V472z" fill={GOLD} />
      {gl("M832 458H1122L1138 474V494H1126V522H1138V562M832 458L818 474V494H828V522H818V562", 5)}
      {gr(812, 498, 14, 20, "#000")}{gr(1128, 498, 14, 20, "#000")}
      <path d="M828 486H860V540H828M1126 486H1093V540H1126" fill="none" stroke={RED} strokeWidth="3" />
      <path d="M946 472H1010L1026 488V540L1014 551H946zM1039 472H1080V517H1039zM1039 526H1080V552H1039z" fill="#000" />
      <path d="M946 551V473H1012L1026 488M1040 517V473H1078M1040 524H1080" fill="none" stroke={RED} strokeWidth="3" />
      <path d="M984 486H1000L1004 505L996 518L1004 536H986L982 520L972 512V494z" fill={GOLD} />
      <Pads x={966} y={482} w={52} h={62} n={40} seed={71} />{gr(1065, 483, 6, 6)}
      <path d="M818 562H890V556H918V562H1138V630L1125 642H832L818 630z" fill="#000" />
      {gl("M818 564H888M818 562V628L834 642H1122L1138 628V562", 7)}
      <path d="M888 562V557H916V562H1138" fill="none" stroke={RED} strokeWidth="3" />
      {gr(936, 575, 38, 36)}{[0, 1, 2, 3].map((i) => gr(906, 576 + i * 9, 18, 5))}
      <Pads x={834} y={578} w={66} h={44} n={44} seed={73} /><Pads x={980} y={568} w={64} h={46} n={64} seed={79} />
      <Pads x={1003} y={570} w={22} h={34} n={20} seed={83} c={RED} /><Pads x={1040} y={570} w={30} h={28} n={12} seed={84} />
      {gr(834, 624, 12, 12)}{gr(921, 624, 12, 12)}{gr(1017, 624, 12, 12)}{gr(1108, 624, 14, 12)}{gr(1107, 588, 12, 12)}
      {gr(976, 637, 20, 6)}{gr(976, 747, 20, 5)}
    </g>

    {/* panel outline, datum and popview leader lines */}
    <path d="M683 436.500H1062M682.500 436V893M682 892.500H1062M1061.500 436V892" fill="none" stroke="#5068c8" />
    <g stroke="#fff" fill="none">
      <circle cx="682.500" cy="892.500" r="7" />
      <path d="M672 892.500h21M682.500 882v21M674 884l17 17M691 884l-17 17" />
      <path d="M954 516L1151 355M954 516L1151 473.500M954 516L1151 550M954 516L1151 643" />
    </g>
    <path d="M954 516L980 495M954 516L990 508M954 516L990 522M1010 504L1052 495M1010 526L1054 533" stroke="#9aa8c8" />
    <path d="M949 512l8 8M957 512l-8 8M947 516h12" stroke="#7db4f0" />
  </svg>
);

const PopDrawing = () => (
  <svg width="567" height="307" viewBox="1161 345 567 307" shapeRendering="crispEdges">
    <path d="M1162 345H1210V434H1413L1431 450V518H1429L1413 534H1162z" fill={GREEN} />
    <path d="M1162 345H1204V439H1404Q1428 443 1428 464V506Q1427 525 1409 529H1162z" fill={GOLD} />
    {([[1439, 366, 73, 56, 1443, 371, 64, 47], [1546, 349, 56, 73, 1550, 353, 47, 64], [1635, 349, 57, 73, 1640, 353, 47, 64], [1428, 450, 98, 68, 1443, 460, 64, 47], [1434, 541, 83, 66, 1443, 550, 64, 47], [1439, 635, 73, 16, 1443, 640, 64, 11], [1579, 489, 149, 162, 1584, 494, 144, 157]] as number[][]).map((r, i) => (
      <g key={i}>
        <rect x={r[0]} y={r[1]} width={r[2]} height={r[3]} fill={GREEN} />
        <rect x={r[4]} y={r[5]} width={r[6]} height={r[7]} fill={GOLD} />
      </g>
    ))}
    <rect x="1719" y="345" width="9" height="91" fill={GREEN} />
  </svg>
);

const OverviewMap = () => (
  <svg width="160" height="432" viewBox="1758 488 160 432" shapeRendering="crispEdges">
    <path d="M1758 600.500H1918" stroke={GREEN} />
    <rect x="1758" y="626" width="160" height="186" fill="#ff0000" />
    <path d="M1758.500 626V809.500H1918" stroke="#c89600" fill="none" />
    <rect x="1765" y="701" width="80" height="95" fill="none" stroke="#30e0e0" strokeWidth="2" />
    <path d="M1766 796H1846" stroke="#b0b8b8" strokeWidth="2" />
    <path d="M1762 793l7 7M1769 793l-7 7" stroke="#40e8e8" />
  </svg>
);

const Logo = () => (
  <svg width="164" height="50" viewBox="1511 23.500 164 50">
    <path d="M1515 38.500L1529 40V38H1535L1533 42H1528zM1513 45L1527 46.500V44.500H1532L1530 48.500H1525zM1515 52L1527 52.500V50.500H1531L1529 54.500H1524zM1513 60L1527 58V56.500H1532L1530 60.500H1524z" fill="#f01808" />
    <g fill="#06068a" stroke="#06068a" strokeWidth="0.800" fontFamily='"Liberation Sans", sans-serif' fontWeight="bold" fontStyle="italic" fontSize="31">
      <text x="1533" y="60" textLength="32" lengthAdjust="spacingAndGlyphs">Fr</text>
      <text x="1584" y="60" textLength="87" lengthAdjust="spacingAndGlyphs">ntline</text>
    </g>
    <circle cx="1575" cy="52.300" r="9" fill="none" stroke="#203a8c" strokeWidth="1.600" />
    <path d="M1575 48.500l3.500 3.800l-3.500 3.800l-3.500-3.800z" fill="#ff1800" />
  </svg>
);

/* ---------- taskbar icons ---------- */
const Disc = () => (
  <svg width="34" height="32" viewBox="0 0 34 32">
    <path d="M4 17l7 9l4 1l-9-14z" fill="#4b4468" />
    <path d="M14 11l8-7" stroke="#4b6488" strokeWidth="2" />
    <ellipse cx="19" cy="20" rx="13" ry="8.500" fill="#0f6c74" />
    <ellipse cx="19" cy="18" rx="12" ry="7.500" fill="#2bb3a8" />
    <path d="M9 15l6 2M28 14l-6 2M12 23l4-3M27 22l-5-2" stroke="#127f84" strokeWidth="2" />
    <ellipse cx="18.500" cy="17.500" rx="5" ry="3.600" fill="#d8d850" />
    <ellipse cx="18.500" cy="17" rx="3.500" ry="2.500" fill="#106870" />
    <path d="M10 25q8 4 17-1" stroke="#e0e060" fill="none" strokeWidth="1.500" />
    <path d="M2 8q5-5 12-4v4l-10 2z" fill="#1ba89c" />
    <path d="M3 19l2 6" stroke="#fff" strokeWidth="1.500" />
  </svg>
);
const taskIcons: { i: React.ReactNode; stack?: boolean; active?: boolean }[] = [
  { i: <svg width="34" height="32" viewBox="0 0 34 32"><path d="M14 30L2 18Q0 10 7 6Q10 1 16 2Q24 1 27 7Q33 12 30 20L19 30z" fill="#ffd784" stroke="#b8802c" /><path d="M15 28L4 14M16 28L9 6M17 28L17 3M18 27L25 7M18 27L29 14" stroke="#c98f3a" /><path d="M22 12l3 6l7 1l-5 5l2 7l-7-3l-7 3l2-7l-5-5l7-1z" fill="#ef8a1d" stroke="#b55a08" /></svg> },
  { i: <svg width="28" height="30" viewBox="0 0 28 30"><path d="M3 1h22v24l-3 4H3z" fill="#f8fcff" stroke="#9ac" /><path d="M6 5h16M6 9h16M6 13h16M6 17h16M6 21h16M6 25h12" stroke="#3a9bd0" strokeWidth="2" /></svg> },
  { i: <svg width="30" height="32" viewBox="0 0 30 32"><path d="M28 1l-6 7M26 5H16L5 13V23L9 28H18L24 24V18H14" fill="none" stroke="#d8200c" strokeWidth="5" /></svg>, stack: true },
  { i: <svg width="30" height="32" viewBox="0 0 30 32"><path d="M1 1h27v30H3l-2-3z" fill="#2038c8" stroke="#102080" /><rect x="8" y="1" width="15" height="10" fill="#e4e8ee" /><rect x="17" y="2" width="4" height="8" fill="#2038c8" /><rect x="4" y="14" width="22" height="16" fill="#fff" /><path d="M5 18h20M5 22h20M5 26h11" stroke="#c44" /><text x="17" y="30" fontSize="7" fontFamily={MONO}>64</text></svg> },
  { i: <svg width="32" height="32" viewBox="0 0 32 32"><path d="M4 28V2H21" fill="none" stroke="#0c9c40" /><path d="M9 11h14q6 1 5 6t-7 5h-7l-2 8h-6l3-12h11q3-2 0-2h-12z" fill="#0d8b3c" /></svg> },
  { i: <svg width="30" height="30" viewBox="0 0 30 30"><rect x="1" y="1" width="28" height="28" rx="5" fill="#1490f4" /><path d="M7 6q13 4 14 11h-3q1 3-1 5l-2 4l-1-5q-4-1-5-5h3q-4-3-5-10z" fill="#fff" /></svg> },
  { i: <Disc /> },
  { i: <svg width="34" height="30" viewBox="0 0 34 30"><path d="M3 2h8l9 10l11-10l-9 12l11 13h-8l-9-10l-12 11l10-13z" fill="#fff" /><path d="M4 3h6l21 23h-6z" fill="#8a108a" stroke="#300030" /><path d="M3 28L30 3" stroke="#200020" strokeWidth="1.500" /></svg>, stack: true, active: true },
  { i: <Disc /> },
  { i: <svg width="32" height="32" viewBox="0 0 32 32"><path d="M5 3h22l3 26L1 27V7z" fill="#eff6e8" stroke="#8ab06a" /><path d="M12 8H29V28H6V20" fill="#fff" /><path d="M20 10h7v4h-7zM20 16h7v4h-7zM13 22h6v4h-6zM21 22h6v4h-6zM6 22h5v4H6z" fill="#8fc06e" /><path d="M5 6l10 13M15 6L5 19" stroke="#2f7a2c" strokeWidth="4" /></svg>, stack: true },
];

const Orb = () => (
  <svg width="38" height="38" viewBox="0 0 38 38">
    <defs>
      <radialGradient id="orb" cx="50%" cy="80%" r="75%">
        <stop offset="0" stopColor="#5cd0f4" />
        <stop offset=".5" stopColor="#2a6fae" />
        <stop offset="1" stopColor="#8fb2cc" />
      </radialGradient>
    </defs>
    <circle cx="19" cy="19" r="18" fill="url(#orb)" stroke="#1a3c60" />
    <path d="M9 12q5-3 9 0l-2 7q-4-3-9 0z" fill="#f0602c" />
    <path d="M20 12q4 3 9 0l-2 7q-5 3-9 0z" fill="#90c83c" />
    <path d="M7 21q5-3 9 0l-2 7q-4-3-9 0z" fill="#4a9ce8" />
    <path d="M18 21q4 3 9 0l-2 7q-5 3-9 0z" fill="#fcc82c" />
    <path d="M3 17Q6 2 19 2T35 17Q19 8 3 17z" fill="#fff" opacity=".3" />
  </svg>
);

const CloseX = () => (
  <svg width="12" height="10" viewBox="0 0 12 10">
    <path d="M2 1l8 8M10 1l-8 8" stroke="#445" strokeWidth="4" />
    <path d="M2 1l8 8M10 1l-8 8" stroke="#fff" strokeWidth="2.500" />
  </svg>
);

const menus: [string, string, string, number][] = [
  ["", "F", "ile", 25], ["", "E", "dit", 25], ["", "A", "ctions", 46], ["O", "p", "tions", 48],
  ["Analysis", "", "", 53], ["DFM", "", "", 32], ["", "S", "tep", 28], ["", "R", "out", 29], ["", "W", "indows", 56],
];

const IconBox = ({ children }: { children: React.ReactNode }) => (
  <svg width="30" height="30" viewBox="0 0 30 30">
    {children}
    <rect x="0.500" y="0.500" width="29" height="29" fill="none" stroke="#000" />
  </svg>
);

export default function App() {
  return (
    <Screen>
      <Global />
      <TitleBar>
        <TitleIcon><XIcon /></TitleIcon>
        <TitleText>Graphic Editor 9.07b2 (00@HY-HYCAM-PC411 - Windows, pid:6624)</TitleText>
        <CaptionButtons>
          <Caption $w={29}><svg width="12" height="12"><rect x="0.500" y="5.500" width="11" height="4" fill="#fff" stroke="#456" /></svg></Caption>
          <Caption $w={28}><svg width="13" height="13" fill="#fff" stroke="#456"><rect x="3.500" y="0.500" width="8" height="8" /><rect x="0.500" y="3.500" width="8" height="8" /><rect x="3.500" y="6.500" width="2" height="2" /></svg></Caption>
          <Caption $w={47}><CloseX /></Caption>
        </CaptionButtons>
      </TitleBar>

      <Header>
        <MenuBar>
          <MenuInner>
            {menus.map(([a, u, b, w]) => (
              <MenuItem key={a + u + b} $w={w}>{a}<u>{u}</u>{b}</MenuItem>
            ))}
            <Push />
            <MenuItem>Help</MenuItem>
          </MenuInner>
        </MenuBar>
        <Brand>
          <Logo />
          <ProductCol>
            <Product>Genesis 2000</Product>
            <ProductSub>Graphic Editor</ProductSub>
          </ProductCol>
          <DateCol>
            <div>25 Jul 2023</div>
            <TimeLine>11:40 PM</TimeLine>
            <Pause><i /><i /></Pause>
          </DateCol>
        </Brand>
      </Header>

      <Main>
        <Side>
          <InfoBox $first>Job : 8g15c02va0</InfoBox>
          <InfoBox>Step: cam</InfoBox>
          <MatrixFrame><MatrixButton>Job Matrix ...</MatrixButton></MatrixFrame>
          <ListFrame>
            <ListEdge>
              <ListView>
                {groups.map((g, i) => (
                  <Group key={i}>
                    {g.flatMap(([c, names]) => names.map((n) => (
                      <LayerRow key={n}>
                        <Check />
                        <Swatch $on={n === "ts"} />
                        <LayerName $c={c}>{n}</LayerName>
                      </LayerRow>
                    )))}
                  </Group>
                ))}
              </ListView>
              <ListRidge />
            </ListEdge>
            <ScrollBar>
              <svg width="11" height="13" viewBox="0 0 11 13"><path d="M5.500 1L1 12H10z" fill={TEAL} stroke={DARK} /><path d="M5.500 1L1 12" stroke={PALE} strokeWidth="1.500" /></svg>
              <Thumb />
              <Push />
              <svg width="11" height="13" viewBox="0 0 11 13"><path d="M5.500 12L1 1H10z" fill={TEAL} stroke={DARK} /><path d="M10 1H1L5.500 12" stroke={PALE} fill="none" strokeWidth="1.500" /></svg>
            </ScrollBar>
          </ListFrame>
          <Selected>Selected : 0</Selected>
        </Side>

        <Canvas><Board /></Canvas>

        <Tools>
          <ToolPanel>
            {icons.slice(0, 16).map(([t, n], i) => <ToolButton key={i} $t={t}><IconBox>{n}</IconBox></ToolButton>)}
          </ToolPanel>
          <ToolPanel $gray>
            {icons.slice(16).map(([t, n], i) => <ToolButton key={i} $t={t}><IconBox>{n}</IconBox></ToolButton>)}
          </ToolPanel>
          <Overview><OverviewMap /></Overview>
          <Coords>{'X = -1.157111"\nY = 13.985021"'}</Coords>
        </Tools>
      </Main>

      <StatusRow>
        <StatusButton $w={33}><svg width="20" height="20" viewBox="0 0 20 20"><path d="M.5.5h19v19h-19zM4 4l12 12M4 8v-4h4M16 12v4h-4" fill="none" stroke="#000" /></svg></StatusButton>
        <StatusButton $w={33}><svg width="20" height="20" viewBox="0 0 20 20"><path d="M.5.5h19v19h-19zM2 18L17 2M6 3v5M10 12h3v4h-3zM14 12l4 4M18 12l-4 4M2 13l6 5" fill="none" stroke="#000" /></svg></StatusButton>
        <StatusButton $w={29} $teal><svg width="18" height="20" viewBox="0 0 18 20"><path d="M.5.5h17v19h-17zM6 3.500h9v13h-12v-10zM9.500 3v14M3 10.500h12" fill="none" stroke="#000" /></svg></StatusButton>
        <XYLabel>X Y :</XYLabel>
        <XYField><XYInput><svg width="7" height="19" viewBox="0 0 7 19"><path d="M0 .5h7M3.500 0v18M0 18.500h7" stroke="#000" /></svg></XYInput></XYField>
        <StatusButton $w={30} $teal><svg width="16" height="20" viewBox="0 0 16 20"><path d="M.5.5h15v19h-15z" fill="none" stroke="#000" /><path d="M8 4v8M8 14v2" stroke="#000" strokeWidth="2" /></svg></StatusButton>
        <Prompt>{"<M1> - Select first area corner"}</Prompt>
        <UnitBox><UnitButton>Inch<i /></UnitButton></UnitBox>
      </StatusRow>
      <MessageRow><MessageFrame><MessageField /></MessageFrame></MessageRow>
      <CreamStrip />

      <Taskbar>
        <Start><Orb /></Start>
        {taskIcons.map((t, i) => <Task key={i} $stack={t.stack} $active={t.active}>{t.i}</Task>)}
        <Tray>
          <TrayIcons viewBox="1667 1041 160 38">
            <g fill="none" stroke="#d8dce2">
              <rect x="1671.500" y="1057.500" width="15" height="8" fill="#c8c8c4" /><path d="M1673 1060h12M1673 1063h12" stroke="#666" strokeDasharray="1 1" /><path d="M1674 1056q2-4 5-2t6-2" />
              <circle cx="1701.500" cy="1058" r="7.500" fill="#1626c0" />
              <path d="M1722.500 1049.500h5v3h-5zM1719.500 1051.500h5v3h-5z" stroke="#fff" />
            </g>
            <text x="1698.500" y="1062.500" fill="#fff" fontSize="12" fontWeight="bold" fontFamily={UI}>?</text>
            <path d="M1719 1062h7l-3.500 3.500zM1737 1063h8l-4-4z" fill="#fff" />
            <path d="M1759.500 1054v14" stroke="#fff" strokeWidth="1.500" /><path d="M1761 1055h6l1 2h5v6h-12z" fill="#fff" />
            <circle cx="1769" cy="1064" r="4.800" fill="#d82818" /><path d="M1767 1062l4 4M1771 1062l-4 4" stroke="#fff" strokeWidth="1.500" />
            <path d="M1783 1059h3l4-4v12l-4-4h-3z" fill="#fff" /><path d="M1792 1058q2 3 0 6M1794.500 1056q3.500 5 0 10" fill="none" stroke="#fff" />
            <path d="M1811.500 1056.500h9v8h-9zM1813 1067.500h6M1816 1065v3M1808.500 1054v4M1806.500 1057.500h4v3h-2v7h4M1806.500 1054v3M1810.500 1054v3" fill="none" stroke="#fff" strokeWidth="1.400" />
          </TrayIcons>
          <Clock>0:02<br />2023/7/26</Clock>
          <ShowDesktop />
        </Tray>
      </Taskbar>

      <PopWindow>
        <PopTitle>
          <PopIcon><XIcon /></PopIcon>
          <PopName>Popview - 1</PopName>
          <PopClose><CloseX /></PopClose>
        </PopTitle>
        <PopBody>
          <PopUpper>
            <PopView><PopDrawing /></PopView>
            <PopTools>
              {popIcons.map((n, i) => (
                <PopToolCell key={i}>
                  <PopToolButton>
                    <svg width="21" height="21" viewBox="0 0 21 21">{n}<rect x="0.500" y="0.500" width="20" height="20" fill="none" stroke="#000" /></svg>
                  </PopToolButton>
                </PopToolCell>
              ))}
            </PopTools>
          </PopUpper>
          <PopCloseBar><PopCloseButton>Close</PopCloseButton></PopCloseBar>
        </PopBody>
      </PopWindow>
    </Screen>
  );
}
